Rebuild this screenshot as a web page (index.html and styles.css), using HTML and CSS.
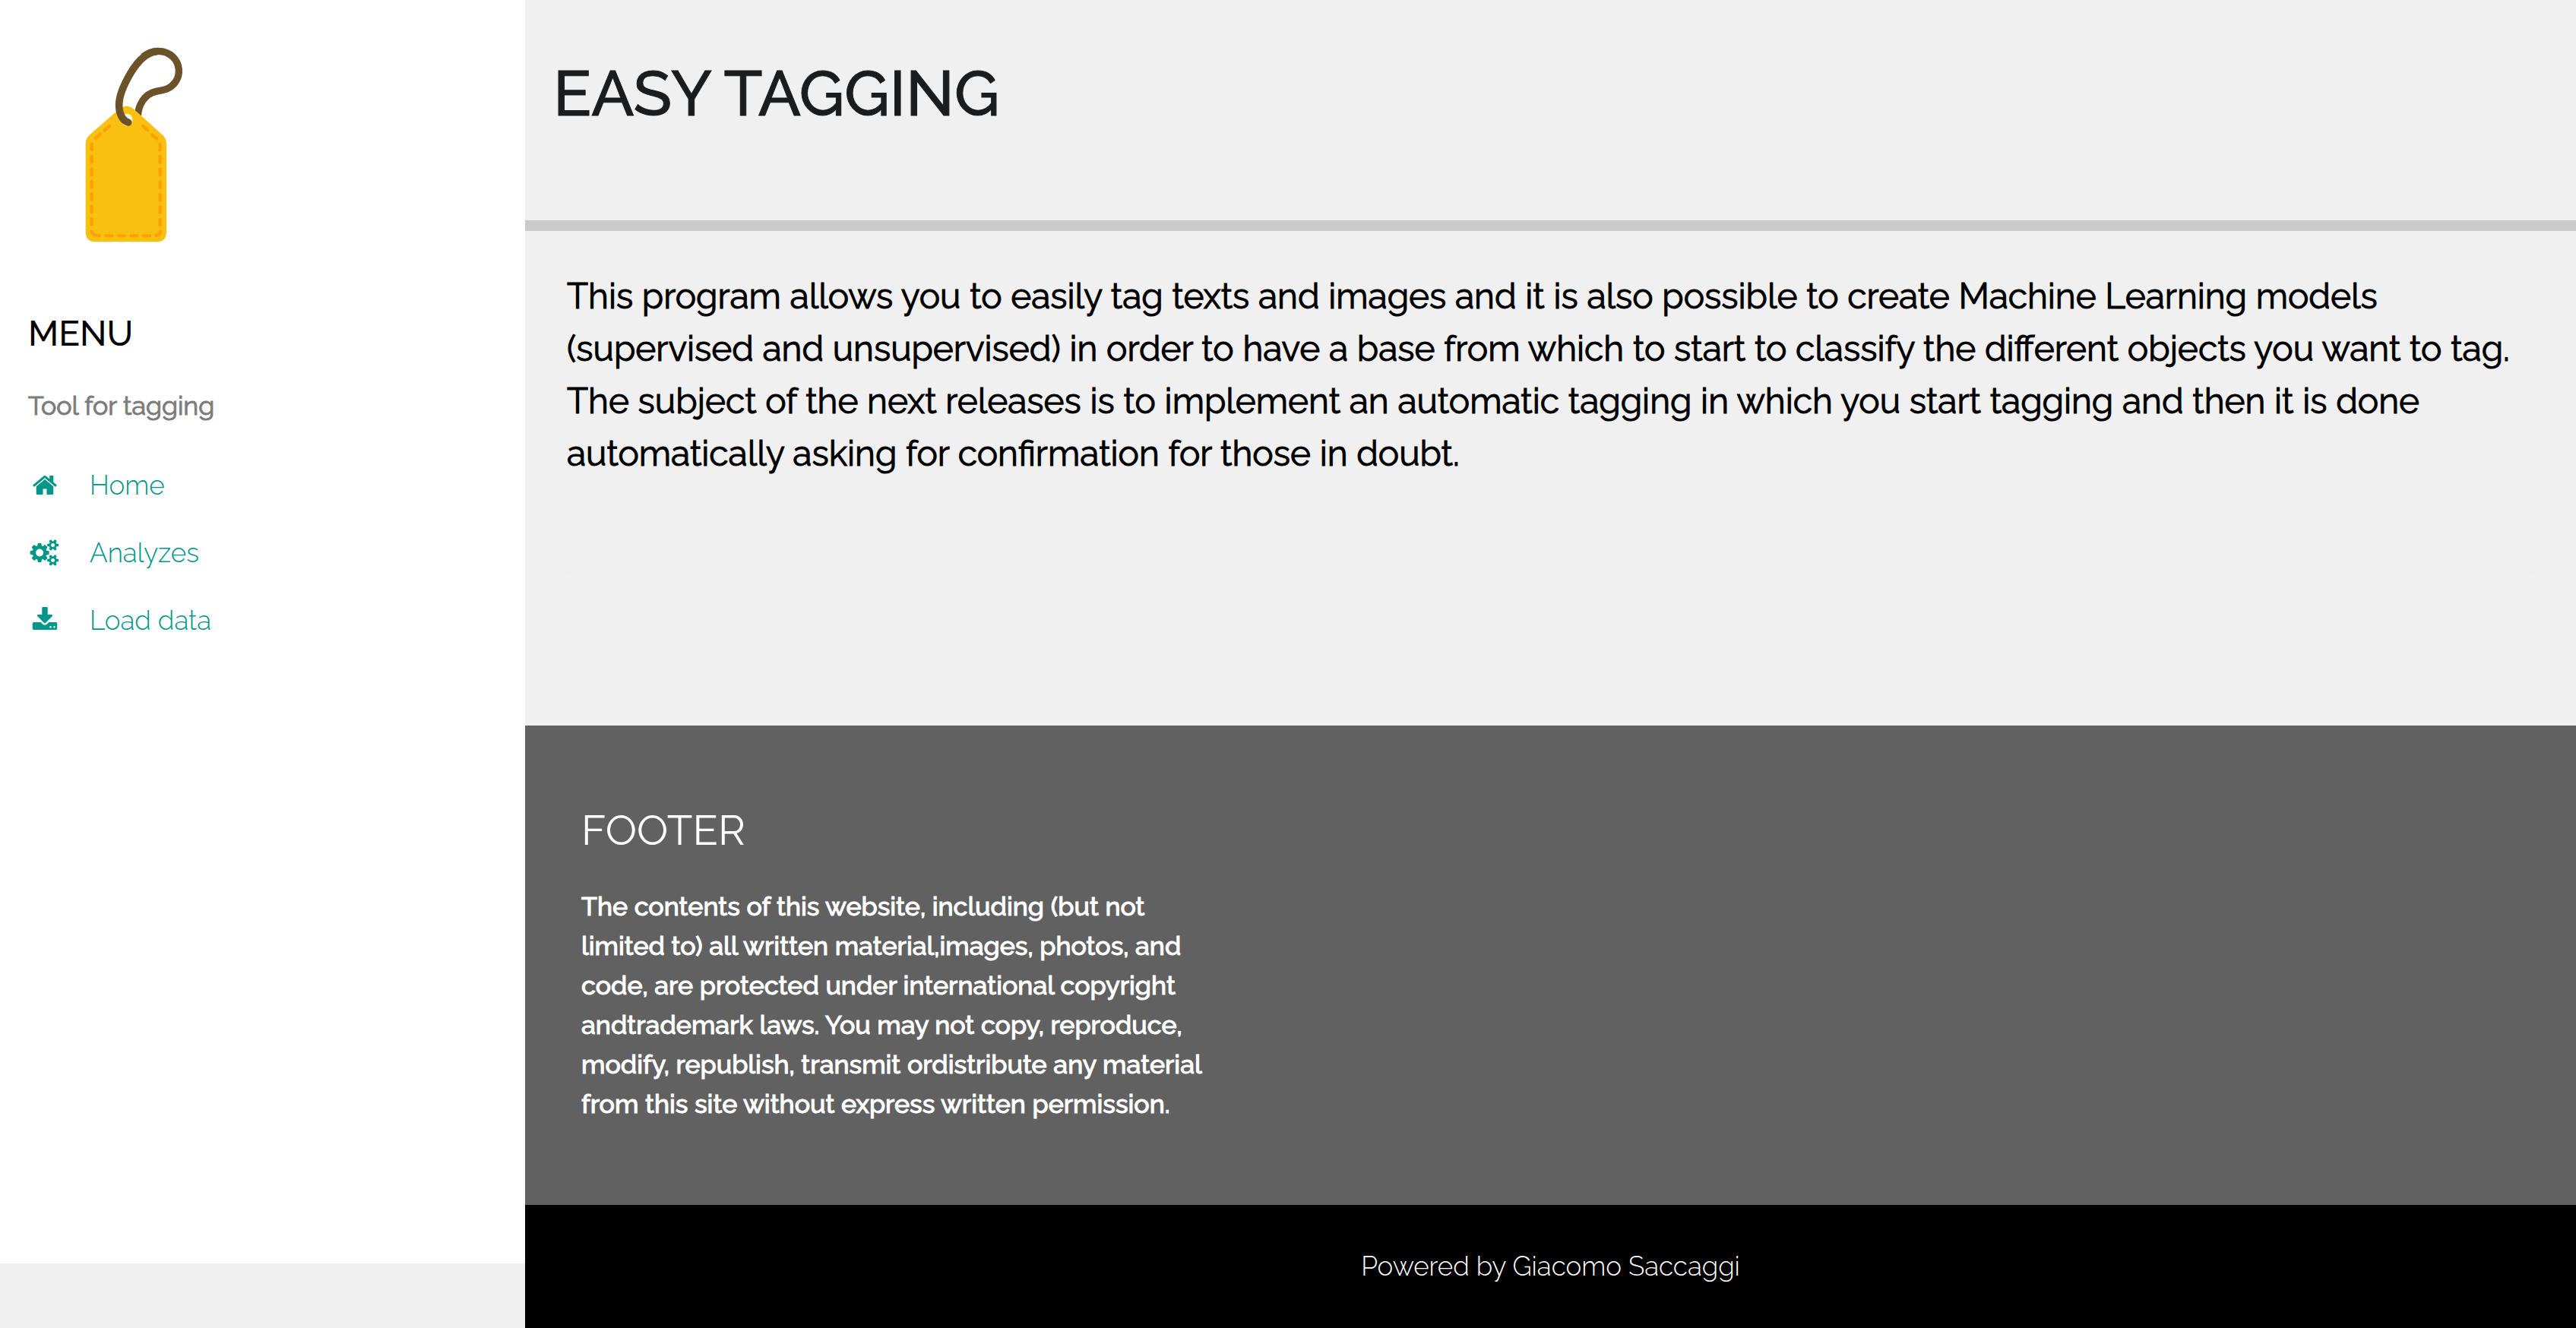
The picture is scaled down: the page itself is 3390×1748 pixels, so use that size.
FILE: index.html
```
<!DOCTYPE html>
<html lang="en">
<head>
<meta charset="utf-8">
<meta name="viewport" content="width=device-width, initial-scale=1">
<title>Easy Tagging</title>
<link rel="stylesheet" href="styles.css">
</head>
<body>
<div class="layout">
  <aside class="sidebar">
    <svg class="logo" viewBox="0 0 720 930" role="img" aria-label="Tag">
      <path d="M364 368C366 325 390 281 436 271C470 265 492 262 512 235C534 205 530 160 502 134C470 104 420 106 385 134" fill="none" stroke="#6b5228" stroke-width="28"/>
      <path fill="#f9c012" fill-rule="evenodd" d="M288 343Q318 317 349 341L462 443Q477 457 477 477V826Q477 865 438 865H197Q158 865 158 826V477Q158 457 173 443ZM321 359A22 24 0 1 0 321 407A22 24 0 1 0 321 359Z"/>
      <path d="M438 113C395 117 362 155 336 198C308 245 290 286 290 325C290 360 304 386 326 393" fill="none" stroke="#6b5228" stroke-width="29" stroke-linecap="round"/>
      <g fill="none" stroke="#fca004" stroke-width="13" stroke-linecap="round">
        <path d="M252 408L233 424M215 440L198 456M384 408L402 423M421 443L439 458"/>
        <path d="M182 478V502M182 528V551M182 577V601M182 626V649M182 675V699M182 724V748M182 774V797"/>
        <path d="M452 478V502M452 528V551M452 577V601M452 628V651M452 677V701M452 726V749M452 776V799"/>
        <path d="M182 824Q184 840 212 841M238 841H262M288 841H312M338 841H362M387 841H411M437 840Q451 838 453 824"/>
      </g>
    </svg>
    <h2 class="menu-title">MENU</h2>
    <p class="tagline">Tool for tagging</p>
    <nav class="nav">
      <a class="nav-link" href="#home">
        <svg class="icon" viewBox="-231 0 2253 1792" aria-hidden="true"><path d="M1472 992v480q0 26-19 45t-45 19h-384v-384h-256v384h-384q-26 0-45-19t-19-45v-480q0-1 .5-3t.5-3l575-474 575 474q1 2 1 6zm223-69l-62 74q-8 9-21 11h-3q-13 0-21-7l-692-577-692 577q-12 8-24 7-13-2-21-11l-62-74q-8-10-7-23.500t11-21.500l719-599q32-26 76-26t76 26l244 204v-195q0-14 9-23t23-9h192q14 0 23 9t9 23v408l219 182q10 8 11 21.500t-7 23.500z"/></svg>
        Home
      </a>
      <a class="nav-link" href="#analyzes">
        <svg class="icon" viewBox="-198 0 2253 1792" aria-hidden="true"><path d="M832 896q0-106-75-181t-181-75-181 75-75 181 75 181 181 75 181-75 75-181zm768 512q0-52-38-90t-90-38-90 38-38 90q0 53 37.500 90.500t90.500 37.500 90.500-37.500 37.500-90.500zm0-1024q0-52-38-90t-90-38-90 38-38 90q0 53 37.500 90.500t90.500 37.500 90.500-37.500 37.500-90.500zm-384 421v185q0 10-7 19.500t-16 10.500l-155 24q-11 35-32 76 34 48 90 115 7 11 7 20 0 12-7 19-23 30-82.500 89.500t-78.500 59.500q-11 0-21-7l-115-90q-37 19-77 31-11 108-23 155-7 24-30 24h-186q-11 0-20-7.500t-10-17.500l-23-153q-34-10-75-31l-118 89q-7 7-20 7-11 0-21-8-144-133-144-160 0-9 7-19 10-14 41-53t47-61q-23-44-35-82l-152-24q-10-1-17-9.500t-7-19.500v-185q0-10 7-19.500t16-10.500l155-24q11-35 32-76-34-48-90-115-7-11-7-20 0-12 7-20 22-30 82-89t79-59q11 0 21 7l115 90q34-18 77-32 11-108 23-154 7-24 30-24h186q11 0 20 7.500t10 17.500l23 153q34 10 75 31l118-89q8-7 20-7 11 0 21 8 144 133 144 160 0 8-7 19-12 16-42 54t-45 60q23 48 34 82l152 23q10 2 17 10.500t7 19.500zm640 533v140q0 16-149 31-12 27-30 52 51 113 51 138 0 4-4 7-122 71-124 71-8 0-46-47t-52-68q-20 2-30 2t-30-2q-14 21-52 68t-46 47q-2 0-124-71-4-3-4-7 0-25 51-138-18-25-30-52-149-15-149-31v-140q0-16 149-31 13-29 30-52-51-113-51-138 0-4 4-7 4-2 35-20t59-34 30-16q8 0 46 46.500t52 67.500q20-2 30-2t30 2q51-71 92-112l6-2q4 0 124 70 4 3 4 7 0 25-51 138 17 23 30 52 149 15 149 31zm0-1024v140q0 16-149 31-12 27-30 52 51 113 51 138 0 4-4 7-122 71-124 71-8 0-46-47t-52-68q-20 2-30 2t-30-2q-14 21-52 68t-46 47q-2 0-124-71-4-3-4-7 0-25 51-138-18-25-30-52-149-15-149-31v-140q0-16 149-31 13-29 30-52-51-113-51-138 0-4 4-7 4-2 35-20t59-34 30-16q8 0 46 46.500t52 67.500q20-2 30-2t30 2q51-71 92-112l6-2q4 0 124 70 4 3 4 7 0 25-51 138 17 23 30 52 149 15 149 31z"/></svg>
        Analyzes
      </a>
      <a class="nav-link" href="#load-data">
        <svg class="icon" viewBox="-231 0 2253 1792" aria-hidden="true"><path d="M1344 1344q0-26-19-45t-45-19-45 19-19 45 19 45 45 19 45-19 19-45zm256 0q0-26-19-45t-45-19-45 19-19 45 19 45 45 19 45-19 19-45zm128-224v320q0 40-28 68t-68 28h-1472q-40 0-68-28t-28-68v-320q0-40 28-68t68-28h465l135 136q58 56 136 56t136-56l136-136h464q40 0 68 28t28 68zm-325-569q17 41-14 70l-448 448q-18 19-45 19t-45-19l-448-448q-31-29-14-70 17-39 59-39h256v-448q0-26 19-45t45-19h256q26 0 45 19t19 45v448h256q42 0 59 39z"/></svg>
        Load data
      </a>
    </nav>
  </aside>
  <div class="page">
    <header class="header">
      <h1 class="title">EASY TAGGING</h1>
    </header>
    <main class="intro">
      <p class="intro-text">This program allows you to easily tag texts and images and it is also possible to create Machine Learning models (supervised and unsupervised) in order to have a base from which to start to classify the different objects you want to tag. The subject of the next releases is to implement an automatic tagging in which you start tagging and then it is done automatically asking for confirmation for those in doubt.</p>
      <hr class="divider">
    </main>
    <footer>
      <div class="footer">
        <h3 class="footer-title">FOOTER</h3>
        <p class="footer-text">The contents of this website, including (but not limited to) all written material,images, photos, and code, are protected under international copyright andtrademark laws. You may not copy, reproduce, modify, republish, transmit ordistribute any material from this site without express written permission.</p>
      </div>
      <div class="powered">Powered by Giacomo Saccaggi</div>
    </footer>
  </div>
</div>
</body>
</html>
```
FILE: styles.css
```
* {
  box-sizing: border-box;
}

body {
  margin: 0;
  background: #f0f0f0;
  color: #000;
  font-family: Raleway, Lato, sans-serif;
  font-size: 35px;
  line-height: 52px;
}

h1, h2, h3, p {
  margin: 0;
}

.layout {
  display: grid;
  grid-template-columns: 691px 1fr;
  min-height: 100vh;
}

.sidebar {
  height: calc(100vh - 85px);
  padding: 30px 0 0 37px;
  background: #fff;
}

.logo {
  display: block;
  width: 240px;
  height: 310px;
  margin: 0 0 65px 23px;
}

.menu-title {
  font-size: 46px;
  font-weight: 500;
  line-height: 69px;
}

.tagline,
.intro-text,
.footer-text {
  -webkit-text-stroke: 1px currentColor;
}

.tagline {
  margin-top: 34px;
  color: #7c7c7c;
  font-size: 34px;
  font-weight: 450;
}

.nav {
  margin-top: 34px;
}

.nav-link {
  display: flex;
  align-items: center;
  gap: 37px;
  padding: 18px 0;
  color: #009688;
  font-weight: 350;
  line-height: 53px;
  text-decoration: none;
}

.icon {
  width: 44px;
  height: 35px;
  fill: currentColor;
}

.page {
  display: flex;
  flex-direction: column;
}

.header {
  height: 304px;
  padding: 61px 37px 0;
  border-bottom: 14px solid #cbcbcb;
}

.title {
  color: #1a1c1d;
  font-size: 83px;
  font-weight: 500;
  line-height: 124px;
  -webkit-text-stroke: 1px currentColor;
}

.intro {
  flex: 1;
  padding: 52px 55px 0;
}

.intro-text {
  font-size: 46px;
  font-weight: 400;
  line-height: 69px;
}

.divider {
  margin: 120px 0 0;
  border: 0;
  border-top: 2px solid #eee;
}

.footer {
  padding: 96px 74px 107px;
  background: #616161;
  color: #fff;
}

.footer-title {
  font-size: 55px;
  font-weight: 400;
  line-height: 83px;
}

.footer-text {
  max-width: 826px;
  margin-top: 33px;
  font-size: 34px;
  font-weight: 500;
}

.powered {
  padding: 55px 37px;
  background: #000;
  color: #fff;
  font-weight: 350;
  text-align: center;
}
```
